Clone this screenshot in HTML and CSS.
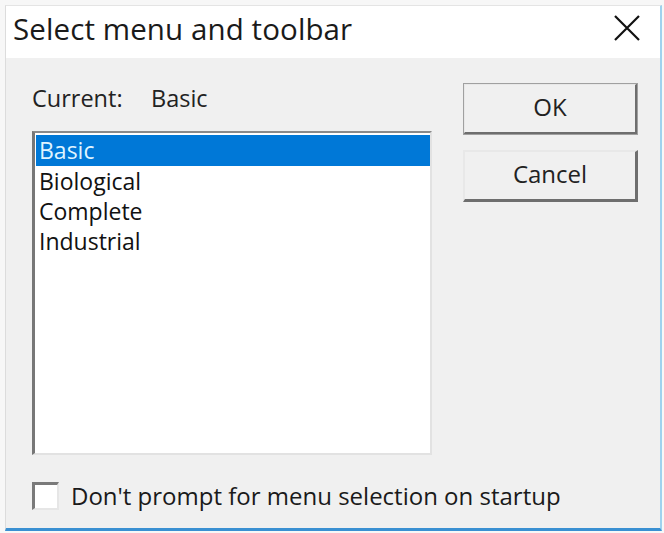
FILE: index.html
```html
<!DOCTYPE html>
<html>
<head>
<meta charset="utf-8">
<link rel="stylesheet" href="styles.css">
</head>
<body>
<div class="window">
  <div class="titlebar">
    <span class="title">Select menu and toolbar</span>
    <svg class="close" width="30" height="30" viewBox="0 0 30 30"><path d="M3 3 L27 27 M27 3 L3 27" stroke="#111" stroke-width="2.2" fill="none"/></svg>
  </div>
  <div class="content">
    <div class="main">
      <div class="left">
        <div class="current"><span class="lbl">Current:</span><span class="val">Basic</span></div>
        <div class="listbox">
          <div class="item selected">Basic</div>
          <div class="item">Biological</div>
          <div class="item">Complete</div>
          <div class="item">Industrial</div>
        </div>
      </div>
      <div class="buttons">
        <div class="btn default">OK</div>
        <div class="btn">Cancel</div>
      </div>
    </div>
    <div class="check-row">
      <span class="checkbox"></span>
      <span class="check-label">Don't prompt for menu selection on startup</span>
    </div>
  </div>
</div>
</body>
</html>
```

FILE: styles.css
```css
html, body {
  margin: 0;
  padding: 0;
  background: #f7f7f7;
  width: 664px;
  height: 533px;
  overflow: hidden;
}
body {
  font-family: "Open Sans", "Noto Sans", sans-serif;
  color: #111;
}
.window {
  margin: 5px 2px 0 5px;
  height: 526px;
  box-sizing: border-box;
  border-left: 1px solid #dcdcdc;
  border-top: 1px solid #e4e4e4;
  border-right: 2px solid #9ed2ee;
  border-bottom: 3px solid #3a90d2;
  display: flex;
  flex-direction: column;
  background: #f0f0f0;
}
.titlebar {
  height: 52px;
  background: #ffffff;
  display: flex;
  align-items: center;
  justify-content: space-between;
  padding: 0 18px 0 7px;
  flex: none;
}
.title {
  font-size: 29.5px;
  color: #1a1a1a;
  margin-top: -8px;
  letter-spacing: 0.1px;
}
.close {
  margin-top: -9px;
}
.content {
  flex: 1;
  display: flex;
  flex-direction: column;
  padding: 0 0 0 26px;
}
.main {
  display: flex;
  gap: 31px;
}
.left {
  width: 400px;
  display: flex;
  flex-direction: column;
}
.current {
  font-size: 23.5px;
  height: 73px;
  padding-top: 24px;
  box-sizing: border-box;
  display: flex;
  color: #222;
}
.lbl {
  width: 119px;
}
.listbox {
  height: 324px;
  box-sizing: border-box;
  background: #fff;
  border-top: 2px solid #8a8a8a;
  border-left: 3px solid #777;
  border-right: 2px solid #e2e2e2;
  border-bottom: 2px solid #e2e2e2;
  padding: 2px 0 0 1px;
}
.item {
  height: 30px;
  line-height: 30px;
  font-size: 23px;
  padding-left: 3px;
  color: #111;
}
.item.selected {
  background: #0078d7;
  color: #dff4ff;
  height: 31px;
}
.buttons {
  display: flex;
  flex-direction: column;
  gap: 15px;
  padding-top: 25px;
}
.btn {
  width: 175px;
  height: 52px;
  box-sizing: border-box;
  border-top: 2px solid #e8e8e8;
  border-left: 2px solid #e8e8e8;
  border-right: 3px solid #6e6e6e;
  border-bottom: 3px solid #6e6e6e;
  background: #f0f0f0;
  display: flex;
  align-items: center;
  justify-content: center;
  font-size: 24px;
  color: #222;
  padding-bottom: 4px;
}
.btn.default {
  outline: 1px solid #a0a0a0;
  outline-offset: -1px;
}
.check-row {
  display: flex;
  align-items: center;
  margin-top: 24px;
  gap: 12px;
}
.checkbox {
  width: 27px;
  height: 28px;
  box-sizing: border-box;
  background: #fff;
  border-top: 3px solid #7a7a7a;
  border-left: 3px solid #7a7a7a;
  border-right: 2px solid #e6e6e6;
  border-bottom: 2px solid #e6e6e6;
}
.check-label {
  font-size: 24px;
  color: #1a1a1a;
  letter-spacing: 0px;
}
```
